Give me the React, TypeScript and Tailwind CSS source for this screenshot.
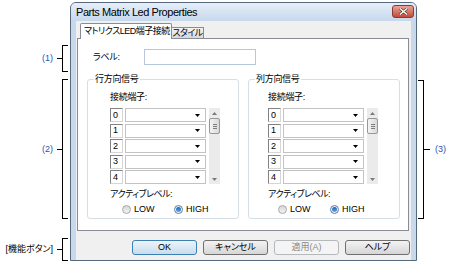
import React from "react";

const rows = ["0", "1", "2", "3", "4"];

function LeftNote({ label, h, blue }: { label: string; h: string; blue?: boolean }) {
  return (
    <div className={`flex items-center justify-end pr-[2px] ${h}`}>
      <span className={`text-[9px] leading-none ${blue ? "text-[#1f56b3]" : "text-black"}`}>{label}</span>
      <div className="ml-[4px] w-[5px] h-px bg-black" />
      <div className="w-[6px] h-full border-l border-t border-b border-black" />
    </div>
  );
}

function DownTri({ color = "#000" }: { color?: string }) {
  return (
    <svg width="5" height="3" viewBox="0 0 5 3">
      <path d="M0 0h5L2.5 3z" fill={color} />
    </svg>
  );
}

function ScrollBar() {
  return (
    <div className="ml-[3px] w-[11px] flex flex-col bg-[#ebebeb]">
      <div className="h-[10px] flex items-center justify-center">
        <svg width="5" height="3" viewBox="0 0 5 3">
          <path d="M0 3h5L2.5 0z" fill="#7a7a7a" />
        </svg>
      </div>
      <div className="h-[16px] rounded-[2px] border border-[#979797] bg-gradient-to-r from-[#f4f4f4] to-[#d9d9d9] flex flex-col items-center justify-center gap-[1px]">
        <div className="w-[4px] h-px bg-[#7d7d7d]" />
        <div className="w-[4px] h-px bg-[#7d7d7d]" />
        <div className="w-[4px] h-px bg-[#7d7d7d]" />
      </div>
      <div className="flex-1" />
      <div className="h-[10px] flex items-center justify-center">
        <DownTri color="#7a7a7a" />
      </div>
    </div>
  );
}

function Radio({ checked, label }: { checked?: boolean; label: string }) {
  return (
    <div className={`flex items-center ${checked ? "" : "w-[52px]"}`}>
      <div
        className={`w-[9px] h-[9px] rounded-full border flex items-center justify-center ${
          checked
            ? "border-[#5b7fa8] bg-gradient-to-b from-[#e8eef5] to-[#f8f8f8]"
            : "border-[#a7a7a7] bg-gradient-to-b from-[#d6d6d6] to-[#f4f4f4]"
        }`}
      >
        {checked && <div className="w-[5px] h-[5px] rounded-full bg-gradient-to-b from-[#1e5fae] to-[#5fa8e8]" />}
      </div>
      <span className="ml-[3px] text-[9px] leading-none">{label}</span>
    </div>
  );
}

function SignalGroup({ title, inner, radio }: { title: string; inner: string; radio: string }) {
  return (
    <fieldset className="w-[152px] border border-[#d5dfe5] rounded-[3px]">
      <legend className="ml-[6px] px-[1px] text-[9px] leading-[12px] tracking-[-0.3px]">{title}</legend>
      <div className={`${inner} pb-[3px]`}>
        <div className="mt-[6px] h-[12px] flex items-center text-[9px] leading-none tracking-[-0.3px]">接続端子:</div>
        <div className="mt-[5px] flex">
          <div className="flex flex-col gap-[1.5px]">
            {rows.map((r) => (
              <div key={r} className="flex h-[14px]">
                <div className="w-[13px] bg-white border border-t-[#828282] border-l-[#828282] border-r-[#d6d6d6] border-b-[#d6d6d6] pl-[2px] flex items-center text-[9px] leading-none">
                  {r}
                </div>
                <div className="ml-[2px] w-[81px] bg-white border border-[#c3c3c3] flex items-center justify-end pr-[5px]">
                  <DownTri />
                </div>
              </div>
            ))}
          </div>
          <ScrollBar />
        </div>
        <div className="mt-[4px] h-[12px] flex items-center text-[9px] leading-none tracking-[-0.5px]">アクティブレベル:</div>
        <div className={`mt-[3px] h-[12px] flex items-center ${radio}`}>
          <Radio label="LOW" />
          <Radio checked label="HIGH" />
        </div>
      </div>
    </fieldset>
  );
}

function Button({ label, kind }: { label: string; kind?: "default" | "disabled" }) {
  const look =
    kind === "default"
      ? "border-[#3c7fb1] bg-gradient-to-b from-[#edf4fa] to-[#c8dcee]"
      : kind === "disabled"
      ? "border-[#b5b9bc] bg-[#f4f4f4] text-[#8a8a8a]"
      : "border-[#707070] bg-gradient-to-b from-[#f3f3f3] to-[#d6d6d6]";
  return (
    <div className={`w-[65px] h-[15px] rounded-[3px] border flex items-center justify-center text-[9px] leading-none ${look}`}>
      {label}
    </div>
  );
}

function Dialog() {
  return (
    <div className="mt-[2px] w-[347px] h-[259px] flex flex-col rounded-t-[6px] border border-[#56697f] bg-[#c9d9ec]">
      {/* title bar */}
      <div className="h-[18px] flex items-start pl-[5px] pr-[2px] rounded-t-[5px] bg-gradient-to-b from-[#e6eef8] to-[#c7d8ed]">
        <span className="mt-[3px] text-[11px] leading-[12px] tracking-[-0.45px]">Parts Matrix Led Properties</span>
        <div className="ml-auto mt-[2px] w-[22px] h-[13px] rounded-[3px] border border-[#8c3b30] bg-gradient-to-b from-[#e8a598] to-[#c2493a] flex items-center justify-center">
          <svg width="9" height="7" viewBox="0 0 9 7">
            <path d="M1 0.5l7 6M8 0.5l-7 6" stroke="#5a2a24" strokeWidth="2.6" />
            <path d="M1 0.5l7 6M8 0.5l-7 6" stroke="#fff" strokeWidth="1.4" />
          </svg>
        </div>
      </div>

      {/* client area */}
      <div className="mx-[5px] flex-1 bg-[#f0f0f0] flex flex-col pt-[2px]">
        <div className="h-[15px] flex items-end pl-[4px]">
          <div className="relative z-10 -mb-px w-[92px] h-[16px] pl-[3px] flex items-center border border-b-0 border-[#898c95] bg-white rounded-t-[2px] text-[9px] leading-none tracking-[-0.5px]">
            マトリクスLED端子接続
          </div>
          <div className="w-[32px] h-[11px] flex items-center justify-center border border-b-0 border-l-0 border-[#898c95] bg-gradient-to-b from-[#f4f4f4] to-[#d8d8d8] text-[9px] leading-none tracking-[-0.5px]">
            スタイル
          </div>
        </div>

        <div className="ml-[1px] w-[332px] h-[193px] border border-[#898c95] bg-white">
          <div className="mt-[10px] h-[16px] flex items-center pl-[15px]">
            <span className="w-[51px] text-[9px] leading-none tracking-[-0.3px]">ラベル:</span>
            <div className="w-[112px] h-[16px] bg-white border border-[#b7c8dc]" />
          </div>
          <div className="mt-[8px] flex gap-[9px] pl-[9px]">
            <SignalGroup title="行方向信号" inner="pl-[22px]" radio="ml-[12px]" />
            <SignalGroup title="列方向信号" inner="pl-[19px]" radio="ml-[10px]" />
          </div>
        </div>

        <div className="mt-[9px] flex justify-end gap-[6px] pr-[1px]">
          <Button label="OK" kind="default" />
          <Button label="キャンセル" />
          <Button label="適用(A)" kind="disabled" />
          <Button label="ヘルプ" />
        </div>
      </div>
    </div>
  );
}

export default function App() {
  return (
    <div className="[font-family:'Liberation_Sans','Noto_Sans_CJK_JP',sans-serif] [font-feature-settings:'palt'] flex items-start w-[475px] h-[265px] bg-white text-black overflow-hidden">
      <div className="w-[70px] flex flex-col pt-[45px]">
        <LeftNote label="(1)" h="h-[27px]" blue />
        <div className="h-[7px]" />
        <LeftNote label="(2)" h="h-[140px]" blue />
        <div className="h-[19px]" />
        <LeftNote label="[機能ボタン]" h="h-[23px]" />
      </div>

      <Dialog />

      <div className="pl-px pt-[80px]">
        <div className="flex items-center h-[139px]">
          <div className="w-[6px] h-full border-r border-t border-b border-black" />
          <div className="w-[6px] h-px bg-black" />
          <span className="ml-[5px] text-[9px] leading-none text-[#1f56b3]">(3)</span>
        </div>
      </div>
    </div>
  );
}
